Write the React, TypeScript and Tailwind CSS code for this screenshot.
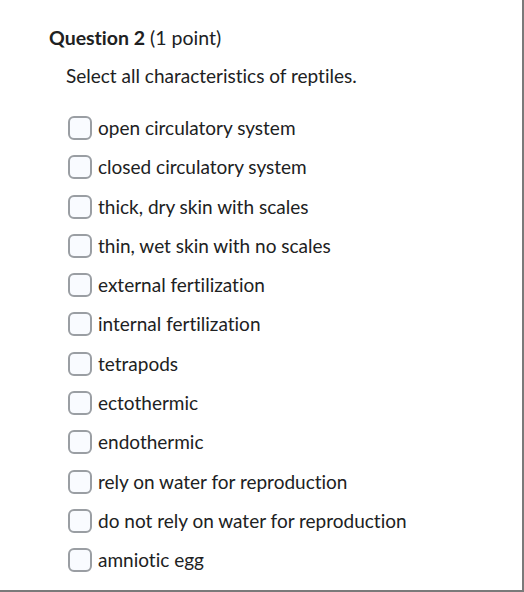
import React from "react";

const options = [
  "open circulatory system",
  "closed circulatory system",
  "thick, dry skin with scales",
  "thin, wet skin with no scales",
  "external fertilization",
  "internal fertilization",
  "tetrapods",
  "ectothermic",
  "endothermic",
  "rely on water for reproduction",
  "do not rely on water for reproduction",
  "amniotic egg",
];

export default function App() {
  return (
    <div
      className="w-[524px] h-[592px] bg-white border-r-2 border-b-2 border-[#7a7a7a] overflow-hidden text-[#202122] [font-variant-ligatures:none]"
      style={{ fontFamily: "Lato, 'Open Sans', sans-serif" }}
    >
      <div className="pl-[49px] pt-[26px]">
        <h2 className="text-[19.5px] leading-[24px]">
          <span className="font-bold">Question 2</span>{" "}
          <span className="font-normal">(1 point)</span>
        </h2>
        <div className="pl-[17px] mt-[14px]">
          <p className="text-[19px] leading-[24px] text-[#202122]">Select all characteristics of reptiles.</p>
          <ul className="mt-[28px] flex flex-col gap-[15.3px]">
            {options.map((o) => (
              <li key={o} className="flex items-center h-[24px]">
                <span className="ml-[2px] w-[24px] h-[24px] rounded-[6px] border-2 border-[#9a9ea3] bg-[#f9fbff] shrink-0" />
                <span className="ml-[6px] text-[19px] leading-[24px] text-[#202122]">{o}</span>
              </li>
            ))}
          </ul>
        </div>
      </div>
    </div>
  );
}
